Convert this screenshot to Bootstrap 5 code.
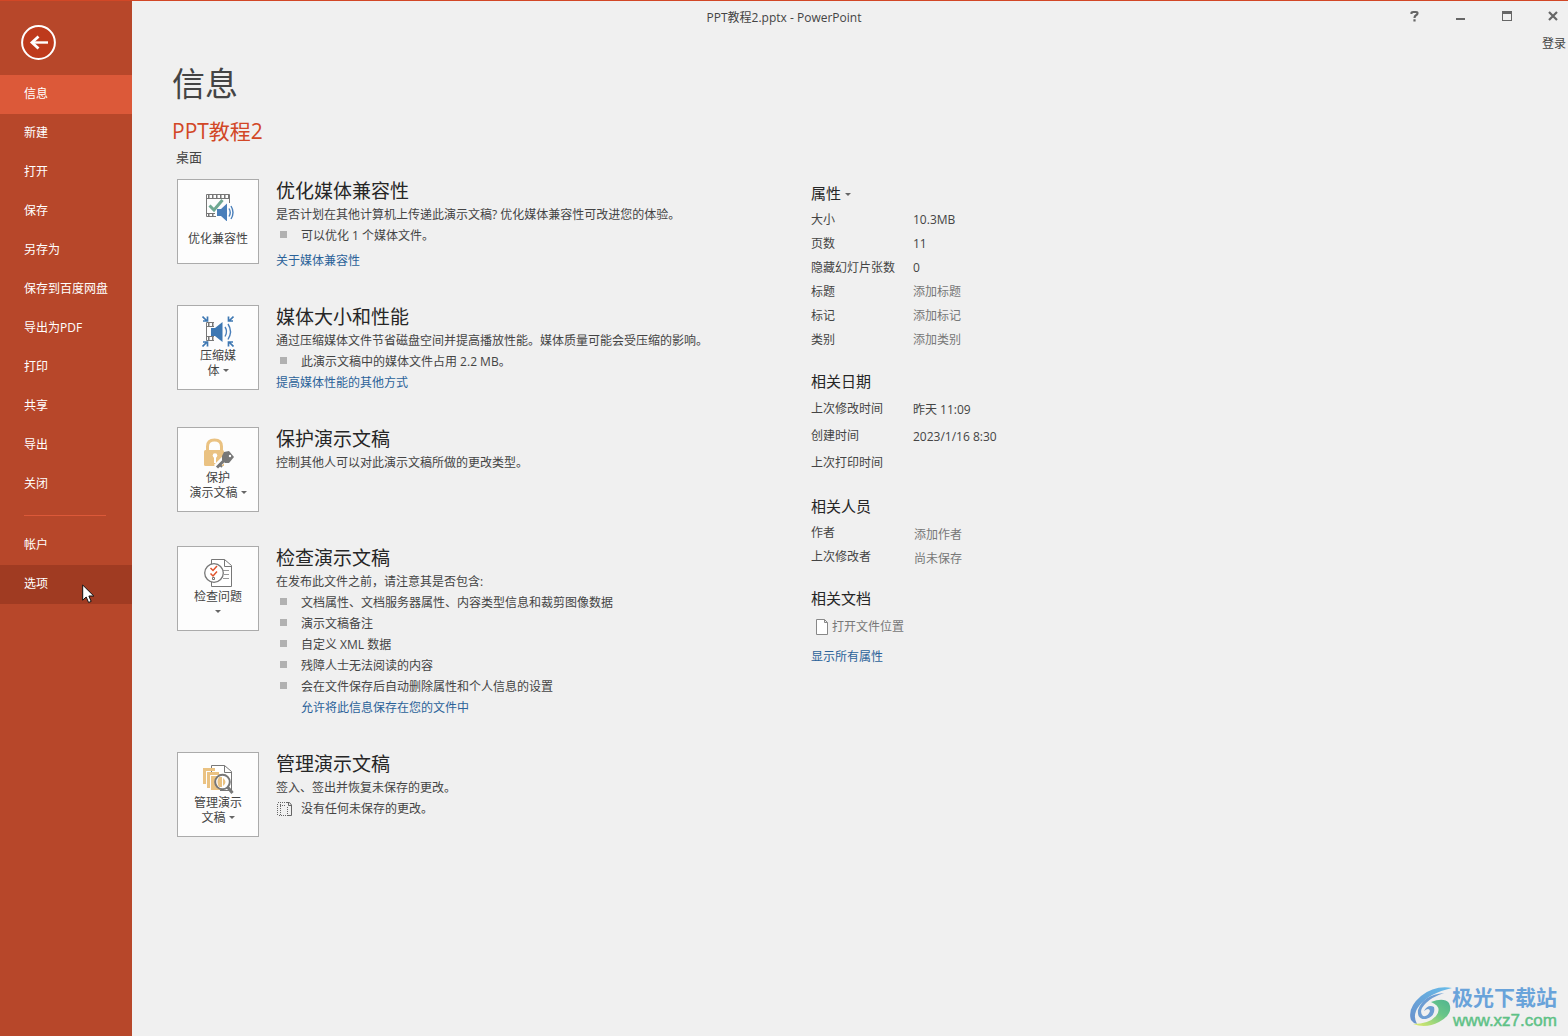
<!DOCTYPE html>
<html lang="zh-CN">
<head>
<meta charset="utf-8">
<meta name="viewport" content="width=device-width, initial-scale=1">
<title>PPT教程2.pptx - PowerPoint</title>
<link href="https://cdn.jsdelivr.net/npm/bootstrap@5.3.0/dist/css/bootstrap.min.css" rel="stylesheet">
<style>
  body { font-family: "Open Sans", "Noto Sans CJK SC", sans-serif; font-size: 12px; line-height: 21px; color: #444; background: #f0f0f0; }
  a { text-decoration: none; color: #2b6299; }
  .app-shell { border-top: 1px solid #d24726; }
  .side-menu { width: 132px; background: #b7472a; }
  .back-btn { width: 36px; height: 36px; margin: 23px 0 15px 21px; }
  .side-menu .nav-link { padding: 0 0 0 24px; height: 39px; line-height: 37px; color: #fff; border-radius: 0; }
  .side-menu .nav-link.active { background: #dc5939; }
  .side-menu .nav-link.hovered { background: #a03b22; }
  .side-rule { height: 1px; margin: 11px 26px 10px 24px; background: #dc5939; }
  .title-bar { height: 32px; padding-left: 36px; }
  .win-controls { gap: 16px; }
  .win-controls .btn { width: 30px; height: 30px; padding: 0 0 2px; }
  .login-link { color: #444; padding-right: 2px; }
  .page-body { padding-left: 40px; }
  .page-title { font-size: 33px; line-height: 48px; margin: 6px 0 9px; color: #444; }
  .doc-title { font-size: 21px; line-height: 28px; margin: 0 0 2px; color: #d24726; }
  .doc-place { font-size: 13px; line-height: 20px; padding-left: 4px; margin-bottom: 12px; }
  .info-col { width: 639px; padding-left: 5px; }
  .info-row { gap: 17px; margin-bottom: 34px; }
  .tile-btn { width: 82px; height: 85px; padding: 9px 0 0; gap: 1px; background: #fdfdfd; border: 1px solid #ababab; border-radius: 0; color: #444; font-size: 12px; line-height: 15px; }
  .tile-btn:hover { background: #fff; border-color: #ababab; }
  .tile-btn svg { width: 32px; height: 32px; }
  .tile-roomy { gap: 10px; }
  .caret-mark { display: inline-block; border: 3px solid transparent; border-top-color: #666; border-bottom: 0; vertical-align: 3px; }
  .info-row h2 { font-size: 19px; line-height: 25px; margin: 0; color: #262626; }
  .dot-list li { padding-left: 25px; background: linear-gradient(#b1b1b1, #b1b1b1) 4px 6px / 7px 7px no-repeat; }
  .link-apart { margin-top: 4px; }
  .link-inset { padding-left: 25px; }
  .props-col { padding-top: 2px; }
  .props-col h3 { font-size: 15px; line-height: 24px; margin: 18px 0 2px; color: #262626; }
  .props-col h3:first-child { margin-top: 0; }
  .props-col th { width: 102px; height: 24px; padding: 0; font-weight: 400; }
  .props-col td { padding: 1px 0 0; }
  .dates-table th { height: 27px; }
  .props-col .people-table td { line-height: 18px; padding: 6px 0 0 1px; }
  .muted-link { color: #777; }
  .props-line { line-height: 30px; }
  .props-line svg { margin: 0 4px 0 5px; }
  .pointer-mark { left: 82px; top: 583px; }
  .site-mark { right: 11px; bottom: 5px; opacity: .9; }
  .site-name { font-size: 21px; line-height: 28px; font-weight: 700; color: #5b9bd8; }
  .site-url { font-family: "Liberation Sans", sans-serif; font-size: 17px; line-height: 20px; color: #50bd7c; -webkit-text-stroke: 0.5px #50bd7c; padding-left: 1px; }
</style>
<script src="https://cdn.jsdelivr.net/npm/bootstrap@5.3.0/dist/js/bootstrap.bundle.min.js"></script>
</head>
<body>
<div class="app-shell d-flex min-vh-100 position-relative">
  <nav class="side-menu flex-shrink-0" aria-label="文件">
    <button type="button" class="btn p-0 border-0 back-btn d-block" aria-label="返回">
      <svg class="d-block" width="36" height="36" viewBox="0 0 36 36" fill="none" stroke="#fff"><circle cx="17.5" cy="18.5" r="16.4" fill="#be3a1c" stroke-width="2"/><path d="M11 18.5H27" stroke-width="2.4"/><path d="M17.5 12.5L11 18.5L17.5 24.5" stroke-width="2.8"/></svg>
    </button>
    <div class="nav flex-column flex-nowrap">
      <a class="nav-link active" href="#" aria-current="page">信息</a>
      <a class="nav-link" href="#">新建</a>
      <a class="nav-link" href="#">打开</a>
      <a class="nav-link" href="#">保存</a>
      <a class="nav-link" href="#">另存为</a>
      <a class="nav-link" href="#">保存到百度网盘</a>
      <a class="nav-link" href="#">导出为PDF</a>
      <a class="nav-link" href="#">打印</a>
      <a class="nav-link" href="#">共享</a>
      <a class="nav-link" href="#">导出</a>
      <a class="nav-link" href="#">关闭</a>
      <div class="side-rule"></div>
      <a class="nav-link" href="#">帐户</a>
      <a class="nav-link hovered" href="#">选项</a>
    </div>
  </nav>

  <div class="flex-grow-1">
    <header>
      <div class="title-bar d-flex align-items-center">
        <div class="flex-grow-1 text-center">PPT教程2.pptx - PowerPoint</div>
        <div class="win-controls d-flex">
          <button type="button" class="btn border-0" aria-label="帮助"><svg class="d-block mx-auto" width="10" height="12" viewBox="0 0 10 12" fill="none" stroke="#666" stroke-width="2.2"><path d="M1.500 4V2.500Q1.500 2 3 2H6Q7.500 2 7.500 3.200Q7.500 4.500 6 5.200Q4.500 6 4.500 8M4.500 9.300V11.500"/></svg></button>
          <button type="button" class="btn border-0" aria-label="最小化"><svg class="d-block mx-auto" width="10" height="12" viewBox="0 0 10 12"><path d="M0 8H9V10H0Z" fill="#666"/></svg></button>
          <button type="button" class="btn border-0" aria-label="最大化"><svg class="d-block mx-auto" width="10" height="12" viewBox="0 0 10 12"><path d="M0 1H10V11H0ZM1 4V10H9V4Z" fill="#666" fill-rule="evenodd"/></svg></button>
          <button type="button" class="btn border-0" aria-label="关闭窗口"><svg class="d-block mx-auto" width="10" height="12" viewBox="0 0 10 12"><path d="M1 2L9 10M9 2L1 10" stroke="#666" stroke-width="2.2"/></svg></button>
        </div>
      </div>
      <div class="text-end"><a class="login-link" href="#">登录</a></div>
    </header>

    <main class="page-body">
      <h1 class="page-title fw-normal">信息</h1>
      <p class="doc-title">PPT教程2</p>
      <p class="doc-place">桌面</p>

      <div class="d-flex align-items-start">
        <div class="info-col flex-shrink-0">
          <section class="info-row d-flex align-items-start">
            <button type="button" class="btn tile-btn tile-roomy d-flex flex-column align-items-center flex-shrink-0">
              <svg viewBox="0 0 32 32"><path d="M4.500 27.500V5.500H27.500V14M4.500 27.500H14M4.500 9.500H27.500M4.500 24.500H13" fill="none" stroke="#777"/><path d="M6 7.500H27M6 26H14" stroke="#777" stroke-width="3" stroke-dasharray="1.500 2.500"/><path d="M7.500 16.500L12 21L20.500 11" fill="none" stroke="#6fa892" stroke-width="3"/><path d="M15 20H19L25 14.500V32.500L19 27H15Z" fill="#4a7fba"/><path d="M27 19.500Q29.500 23.500 27 27.500M29 17Q33 23.500 29 30" fill="none" stroke="#4a7fba" stroke-width="1.400"/></svg>
              <span>优化兼容性</span>
            </button>
            <div>
              <h2 class="fw-normal">优化媒体兼容性</h2>
              <div>是否计划在其他计算机上传递此演示文稿? 优化媒体兼容性可改进您的体验。</div>
              <ul class="dot-list list-unstyled m-0"><li>可以优化 1 个媒体文件。</li></ul>
              <div class="link-apart"><a href="#">关于媒体兼容性</a></div>
            </div>
          </section>

          <section class="info-row d-flex align-items-start">
            <button type="button" class="btn tile-btn d-flex flex-column align-items-center flex-shrink-0">
              <svg viewBox="0 0 32 32"><path d="M12 7.500H4.500V25.500H12M4.500 11.500H12M4.500 21.500H12" fill="none" stroke="#777"/><path d="M6 9.500H14M6 23.500H14" stroke="#777" stroke-width="3" stroke-dasharray="1.500 2.500"/><path d="M9 13H13L20.500 7V27L13 21H9Z" fill="#3e78b3"/><path d="M23 12Q26 16.500 23 21.500M26 9Q31 16.500 26 24.500" fill="none" stroke="#4a7fba" stroke-width="1.400"/><path d="M0.500 1.500L5 6M31.500 1.500L27 6M0.500 31.500L5 27M31.500 31.500L27 27M1 6H5.500V1.500M31 6H26.500V1.500M1 27H5.500V31.500M31 27H26.500V31.500" fill="none" stroke="#3e78b3" stroke-width="1.700"/></svg>
              <span>压缩媒<br>体 <i class="caret-mark"></i></span>
            </button>
            <div>
              <h2 class="fw-normal">媒体大小和性能</h2>
              <div>通过压缩媒体文件节省磁盘空间并提高播放性能。媒体质量可能会受压缩的影响。</div>
              <ul class="dot-list list-unstyled m-0"><li>此演示文稿中的媒体文件占用 2.2 MB。</li></ul>
              <div><a href="#">提高媒体性能的其他方式</a></div>
            </div>
          </section>

          <section class="info-row d-flex align-items-start">
            <button type="button" class="btn tile-btn d-flex flex-column align-items-center flex-shrink-0">
              <svg viewBox="0 0 32 32"><path d="M5.500 14V9.500Q5.500 3 12.500 3Q19.500 3 19.500 9.500V14" fill="none" stroke="#eac282" stroke-width="3"/><path d="M3.500 13H20.500Q22 13 22 14.500V29H3.500Q2 29 2 27.500V14.500Q2 13 3.500 13Z" fill="#eac282"/><circle cx="13" cy="18.500" r="2.300" fill="#fff"/><path d="M12 19H14V26H12Z" fill="#fff"/><path d="M14 30L24 20" stroke="#fdfdfd" stroke-width="6"/><path d="M22 15L27 14L32 20L27 26H23L20 23V19Z" fill="#777"/><path d="M15 30.500L24 21.500" stroke="#777" stroke-width="3"/><path d="M17 27L20 30" stroke="#777" stroke-width="2"/><circle cx="28" cy="19" r="1.200" fill="#fff"/></svg>
              <span>保护<br>演示文稿 <i class="caret-mark"></i></span>
            </button>
            <div>
              <h2 class="fw-normal">保护演示文稿</h2>
              <div>控制其他人可以对此演示文稿所做的更改类型。</div>
            </div>
          </section>

          <section class="info-row d-flex align-items-start">
            <button type="button" class="btn tile-btn d-flex flex-column align-items-center flex-shrink-0">
              <svg viewBox="0 0 32 32"><path d="M9.500 8V3.500H22.500L29.500 9.500V30.500H9.500V25M22.500 3.500V10.500H29.500" fill="#fff" stroke="#777"/><path d="M21 14.500H27M22 18.500H27M21 22.500H27" stroke="#999"/><circle cx="12" cy="17" r="9.300" fill="#fff" stroke="#777" stroke-width="1.300"/><path d="M8.500 12L11 14.500L15 10M8.500 17.500L11 20L15 15.500" fill="none" stroke="#e0532c" stroke-width="1.500"/><path d="M10.500 21.500H12.500V23.500H10.500Z" fill="none" stroke="#777"/></svg>
              <span>检查问题<br><i class="caret-mark"></i></span>
            </button>
            <div>
              <h2 class="fw-normal">检查演示文稿</h2>
              <div>在发布此文件之前，请注意其是否包含:</div>
              <ul class="dot-list list-unstyled m-0">
                <li>文档属性、文档服务器属性、内容类型信息和裁剪图像数据</li>
                <li>演示文稿备注</li>
                <li>自定义 XML 数据</li>
                <li>残障人士无法阅读的内容</li>
                <li>会在文件保存后自动删除属性和个人信息的设置</li>
              </ul>
              <div class="link-inset"><a href="#">允许将此信息保存在您的文件中</a></div>
            </div>
          </section>

          <section class="info-row d-flex align-items-start">
            <button type="button" class="btn tile-btn d-flex flex-column align-items-center flex-shrink-0">
              <svg viewBox="0 0 32 32"><path d="M9.500 12V3.500H22.500L29.500 9.500V28.500H18M22.500 3.500V10.500H29.500" fill="#fff" stroke="#777"/><path d="M1 6H13V9H4V22H1ZM5 10H17V13H8V26H5ZM9 14H20V28H9Z" fill="#eac282"/><circle cx="20.500" cy="20" r="7.300" fill="#fff" stroke="#777" stroke-width="2"/><path d="M17 15Q14 20 17 25H20V15ZM21 16Q26 20 21 24Z" fill="#eac282"/><path d="M25.500 25L30.500 31" stroke="#777" stroke-width="3"/></svg>
              <span>管理演示<br>文稿 <i class="caret-mark"></i></span>
            </button>
            <div>
              <h2 class="fw-normal">管理演示文稿</h2>
              <div>签入、签出并恢复未保存的更改。</div>
              <div class="d-flex align-items-center">
                <svg class="me-2" width="17" height="16" viewBox="0 0 17 16" fill="none" stroke="#666"><path d="M2 1.500H11" stroke-dasharray="1 1"/><path d="M1.500 3V14M4.500 3V14M3 14.500H12M4 4.500H9" stroke-dasharray="1 1"/><path d="M10 1.500H13.500L15.500 4V14.500H12M12.500 1.500V4.500H15.500"/><path d="M11.500 6V14" stroke-dasharray="1 1"/></svg>
                <span>没有任何未保存的更改。</span>
              </div>
            </div>
          </section>
        </div>

        <aside class="props-col">
          <h3 class="fw-normal">属性<i class="caret-mark ms-1"></i></h3>
          <table>
            <tr><th scope="row">大小</th><td>10.3MB</td></tr>
            <tr><th scope="row">页数</th><td>11</td></tr>
            <tr><th scope="row" class="text-nowrap">隐藏幻灯片张数</th><td>0</td></tr>
            <tr><th scope="row">标题</th><td><a class="muted-link" href="#">添加标题</a></td></tr>
            <tr><th scope="row">标记</th><td><a class="muted-link" href="#">添加标记</a></td></tr>
            <tr><th scope="row">类别</th><td><a class="muted-link" href="#">添加类别</a></td></tr>
          </table>
          <h3 class="fw-normal">相关日期</h3>
          <table class="dates-table">
            <tr><th scope="row">上次修改时间</th><td>昨天 11:09</td></tr>
            <tr><th scope="row">创建时间</th><td>2023/1/16 8:30</td></tr>
            <tr><th scope="row">上次打印时间</th><td></td></tr>
          </table>
          <h3 class="fw-normal">相关人员</h3>
          <table class="people-table">
            <tr><th scope="row">作者</th><td><a class="muted-link" href="#">添加作者</a></td></tr>
            <tr><th scope="row">上次修改者</th><td><span class="muted-link">尚未保存</span></td></tr>
          </table>
          <h3 class="fw-normal">相关文档</h3>
          <div class="props-line"><a class="muted-link d-flex align-items-center" href="#"><svg width="12" height="16" viewBox="0 0 12 16" fill="#fff" stroke="#888"><path d="M0.500 0.500H8.500L11.500 3.500V15.500H0.500ZM8.500 0.500V3.500H11.500"/></svg>打开文件位置</a></div>
          <div class="props-line"><a href="#">显示所有属性</a></div>
        </aside>
      </div>
    </main>
  </div>

  <svg class="pointer-mark position-absolute" width="13" height="20" viewBox="0 0 13 20"><path d="M0.700 1V16.200L4.200 13L6.600 18.500L9.200 17.400L6.900 12H11.800Z" fill="#fff" stroke="#111"/></svg>

  <div class="site-mark position-absolute d-flex align-items-center">
    <svg width="43" height="42" viewBox="0 0 43 42">
      <defs>
        <linearGradient id="sky" x1="0" y1="1" x2="1" y2="0"><stop offset="0" stop-color="#5a86c8"/><stop offset="1" stop-color="#5ab8ea"/></linearGradient>
        <linearGradient id="leaf" x1="0" y1="1" x2="1" y2="0"><stop offset="0" stop-color="#e6ee5a"/><stop offset=".6" stop-color="#5cc27e"/><stop offset="1" stop-color="#3fae86"/></linearGradient>
      </defs>
      <path d="M43 2Q26 -1 12 10Q-2 22 2 34Q4 37 8 38Q3 29 10 20Q20 7 43 2Z" fill="url(#sky)"/>
      <path d="M35 7Q14 9 9 24Q8 34 17 33Q27 30 25 21Q19 18 15 25Q20 21 21 25Q19 31 14 30Q9 25 17 17Q23 11 35 7Z" fill="#5f95d0"/>
      <path d="M22 16Q35 11 40 17Q45 28 30 36Q17 43 4 38Q20 38 27 30Q34 21 22 16Z" fill="url(#leaf)"/>
    </svg>
    <div>
      <div class="site-name">极光下载站</div>
      <div class="site-url">www.xz7.com</div>
    </div>
  </div>
</div>
</body>
</html>
